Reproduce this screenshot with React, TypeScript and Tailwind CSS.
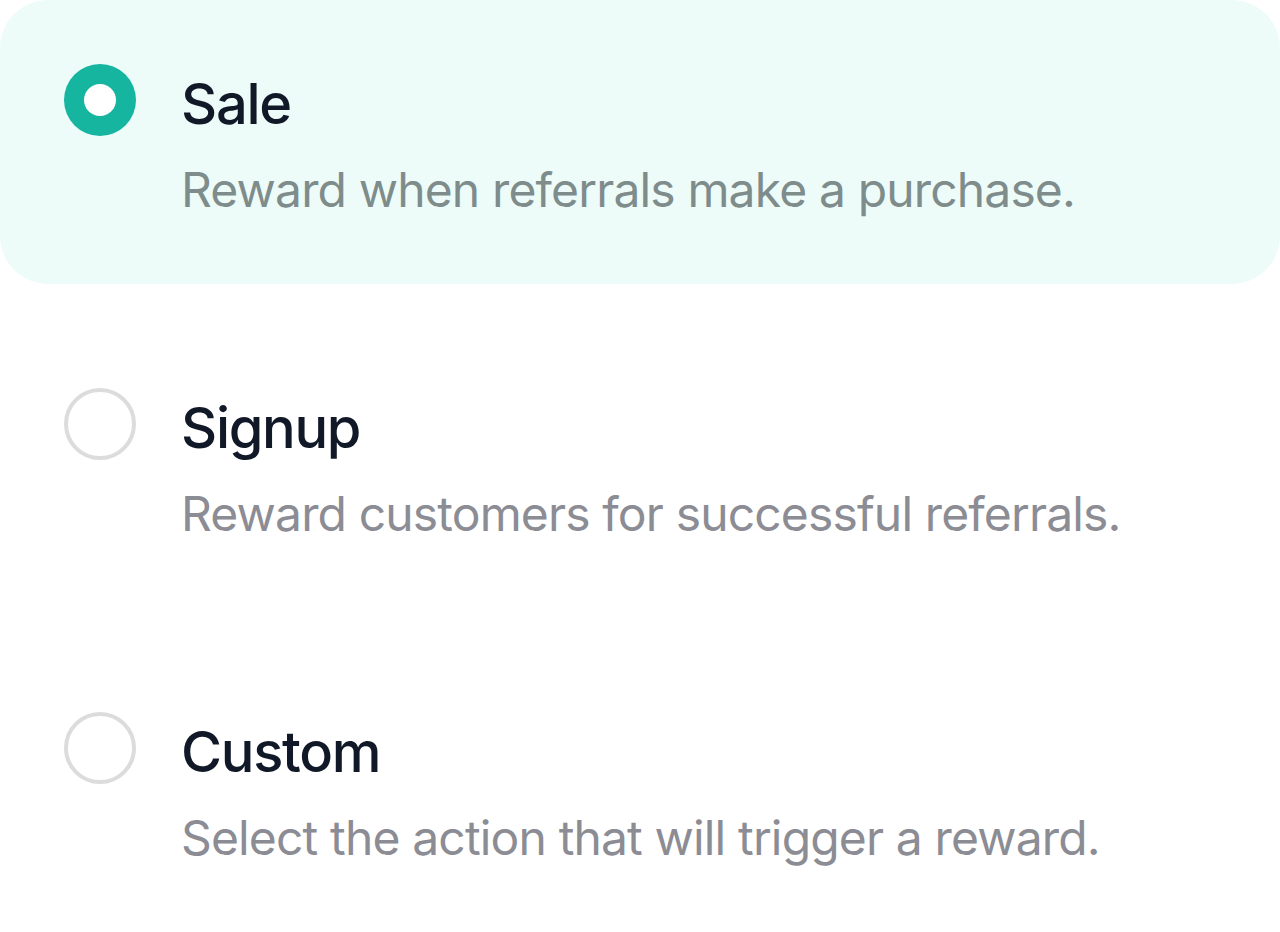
import React, { useState } from "react";

type Option = { id: string; title: string; description: string };

const options: Option[] = [
  { id: "sale", title: "Sale", description: "Reward when referrals make a purchase." },
  { id: "signup", title: "Signup", description: "Reward customers for successful referrals." },
  { id: "custom", title: "Custom", description: "Select the action that will trigger a reward." },
];

function Radio({ checked }: { checked: boolean }) {
  return checked ? (
    <span className="flex h-[72px] w-[72px] shrink-0 items-center justify-center rounded-full bg-[#15b59f]">
      <span className="h-[32px] w-[32px] rounded-full bg-white" />
    </span>
  ) : (
    <span className="block h-[72px] w-[72px] shrink-0 rounded-full border-[4px] border-[#dcdcdc] bg-white" />
  );
}

export default function App() {
  const [selected, setSelected] = useState("sale");

  return (
    <div
      className="min-h-[932px] w-full bg-white"
      style={{ fontFamily: "Inter, 'Noto Sans', sans-serif" }}
    >
      <div className="flex flex-col gap-[40px]">
        {options.map((o) => {
          const active = o.id === selected;
          return (
            <button
              key={o.id}
              type="button"
              onClick={() => setSelected(o.id)}
              className={`flex w-full items-start gap-[45px] rounded-[48px] px-[64px] pt-[64px] pb-[60px] text-left ${
                active ? "bg-[#edfcf9]" : "bg-white"
              }`}
            >
              <Radio checked={active} />
              <span className="flex flex-col">
                <span className="text-[56px] font-medium leading-[80px] tracking-[-1.3px] text-[#111827]">
                  {o.title}
                </span>
                <span
                  className={`mt-[12px] text-[48px] leading-[68px] tracking-[-0.85px] ${
                    active ? "text-[#7f8c8c]" : "text-[#8c8c94]"
                  }`}
                >
                  {o.description}
                </span>
              </span>
            </button>
          );
        })}
      </div>
    </div>
  );
}
